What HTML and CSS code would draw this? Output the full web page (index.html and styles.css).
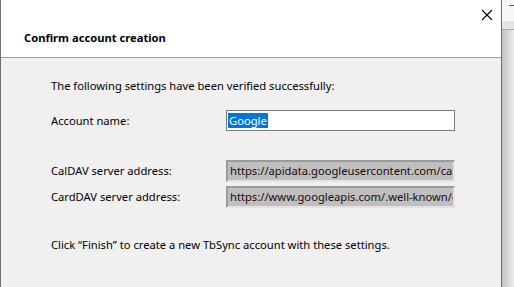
FILE: index.html
```html
<!DOCTYPE html>
<html lang="en">
<head>
  <meta charset="UTF-8" />
  <title>Confirm account creation</title>
  <link rel="stylesheet" href="styles.css">
</head>
<body>

<div class="dialog">
  <div class="dialog-head">
    <div class="head-bar">
      <svg class="close" width="12" height="12" viewBox="0 0 12 12">
        <path d="M1 1 L11 11 M11 1 L1 11" stroke="#000" stroke-width="1.1" fill="none"/>
      </svg>
    </div>
    <h1>Confirm account creation</h1>
  </div>

  <div class="dialog-body">
    <p class="intro">The following settings have been verified successfully:</p>

    <div class="row row-name">
      <label>Account name:</label>
      <div class="input"><span class="sel">Google</span></div>
    </div>

    <div class="servers">
      <div class="row">
        <label>CalDAV server address:</label>
        <div class="readonly">https://apidata.googleusercontent.com/caldav/v2/</div>
      </div>
      <div class="row">
        <label>CardDAV server address:</label>
        <div class="readonly">https://www.googleapis.com/.well-known/carddav</div>
      </div>
    </div>

    <p class="finish">Click “Finish” to create a new TbSync account with these settings.</p>
  </div>
</div>

<div class="behind">
  <div class="behind-top"></div>
  <div class="behind-bar"></div>
  <div class="behind-rest"></div>
</div>

</body>
</html>
```

FILE: styles.css
```css
* { box-sizing: border-box; }
body {
  margin: 0;
  display: flex;
  height: 287px;
  overflow: hidden;
  font-family: 'Noto Sans', 'Open Sans', sans-serif;
  font-size: 11.2px;
  color: #000;
  background: #f0f0f0;
}
.dialog {
  width: 502px;
  height: 100%;
  border-left: 1px solid #6f6f6f;
  border-right: 1px solid #6f6f6f;
  background: #f0f0f0;
  display: flex;
  flex-direction: column;
}
.dialog-head {
  background: #fff;
  height: 58px;
  border-bottom: 1px solid #a0a0a0;
  padding: 0 0 0 23px;
}
.head-bar {
  display: flex;
  justify-content: flex-end;
  height: 30px;
  padding: 9px 8px 0 0;
}
.close { display: block; }
.dialog-head h1 {
  margin: 0;
  font-size: 11.2px;
  font-weight: bold;
  line-height: 16px;
}
.dialog-body {
  padding: 20px 0 0 50px;
}
.intro {
  margin: 0;
  line-height: 16px;
}
.row {
  display: grid;
  grid-template-columns: 175px 229px;
  align-items: center;
}
.row label { line-height: 16px; }
.row-name { margin-top: 16px; }
.input {
  height: 21px;
  background: #fff;
  border: 1px solid #7a7a7a;
  padding: 2px 0 0 1px;
  line-height: 15px;
}
.sel {
  background: #0078d7;
  color: #fff;
  padding: 0 1px;
}
.servers {
  margin-top: 29px;
  display: flex;
  flex-direction: column;
  gap: 4px;
}
.readonly {
  height: 22px;
  background: #bfbfbf;
  border-top: 2px solid #9a9a9a;
  border-left: 2px solid #9a9a9a;
  border-right: 2px solid #e3e3e3;
  border-bottom: 2px solid #e3e3e3;
  padding: 1px 0 0 2px;
  line-height: 15px;
  white-space: nowrap;
  overflow: hidden;
  color: #1a0a0a;
}
.finish {
  margin: 29px 0 0;
  line-height: 16px;
}
.behind {
  flex: 1;
  display: flex;
  flex-direction: column;
}
.behind-top {
  height: 21px;
  background: #f7f7f7;
  position: relative;
}
.behind-top::after {
  content: "";
  position: absolute;
  left: 7px;
  top: 5px;
  width: 5px;
  height: 1px;
  background: #555;
}
.behind-bar {
  height: 9px;
  background: #e4e4e4;
  border-bottom: 1px solid #a8a8a8;
}
.behind-rest {
  flex: 1;
  background: linear-gradient(to right, #c4c4c4, #ececec);
}
```
